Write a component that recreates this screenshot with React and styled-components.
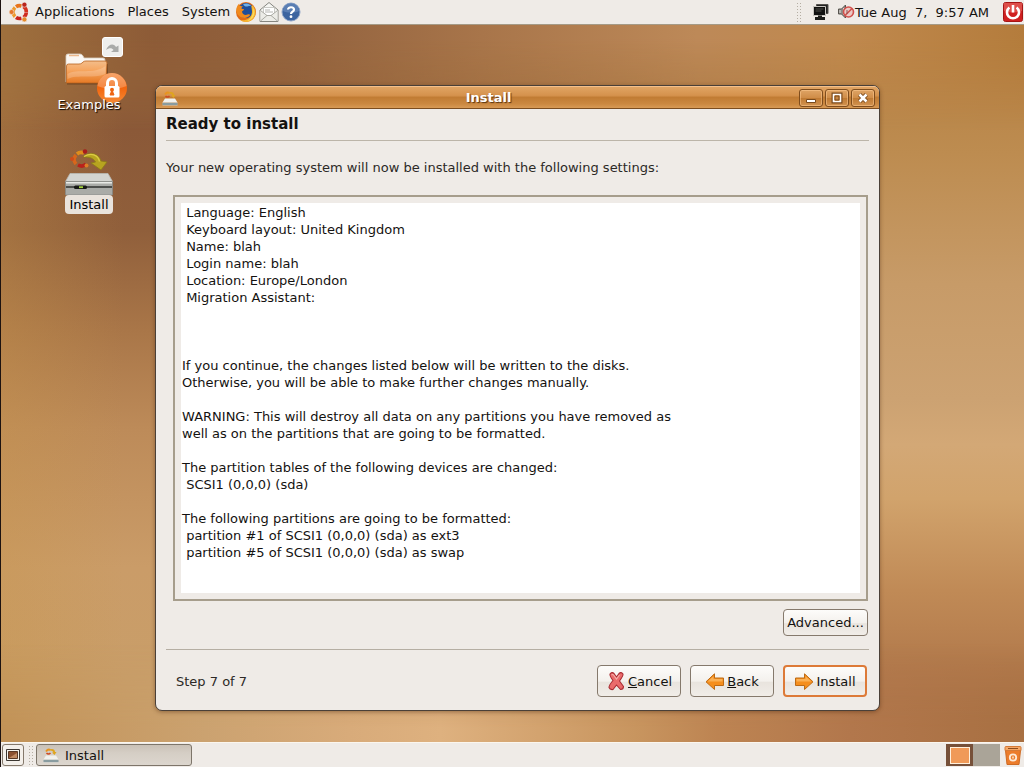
import React from 'react';
import styled, { createGlobalStyle, css } from 'styled-components';

const GlobalStyle = createGlobalStyle`
  *, *::before, *::after { box-sizing: border-box; }
  body {
    margin: 0;
    font-family: "DejaVu Sans", sans-serif;
    font-size: 13px;
    line-height: 17px;
    color: #141210;
  }
  button { font: inherit; color: inherit; margin: 0; padding: 0; cursor: default; }
  svg { display: block; flex: none; }
`;

const Screen = styled.div`
  position: relative;
  isolation: isolate;
  display: flex;
  flex-direction: column;
  min-height: 100vh;
  border-left: 1px solid #1c1210;
  background:
    linear-gradient(to right, rgba(200, 150, 75, 0.35), transparent 12%),
    linear-gradient(to bottom, #9a6a3b 24px, #8b5938 17%, #905f3b 30%, #a97648 43%, #bd8b59 56%, #ca9c68 74%, #c89f69 97%);
`;

const wallpaperLayer = css`
  content: '';
  position: absolute;
  inset: 0;
  z-index: -1;
`;

const Wallpaper = styled.div`
  ${wallpaperLayer}

  &::before {
    ${wallpaperLayer}
    background: linear-gradient(to bottom, #b47e40 24px, #bd8c50 20%, #c79b68 37%, #cca272 52%, #d3a876 58%, #d1a36c 65%, #c08a56 77%, #b27a4c 87%, #aa7248 97%);
    mask-image: linear-gradient(to right, transparent 25%, #000 86%);
  }

  &::after {
    ${wallpaperLayer}
    background: linear-gradient(to right, #c19257, #cba270 20%, #d8ab7a 34%, #deb17f 43%, #c8955f 62%, #bd8452 70%, #b2774c 83%, #a87042);
    mask-image: linear-gradient(to bottom, transparent 84%, #000 95%);
  }
`;

const UpperGlow = styled.div`
  position: absolute;
  inset: 0 0 auto 0;
  height: 130px;
  z-index: -1;
  background: linear-gradient(to right, #9f703d, #8d5b37 15%, #93633f 30%, #a8754a 47%, #bd8958 68%, #c0894e 82%, #b47c3c);
  mask-image: linear-gradient(to bottom, #000 30%, transparent);
`;

const Panel = styled.div`
  display: flex;
  align-items: center;
  height: 25px;
  background: #efebe7;
  ${(p) =>
    p.$bottom
      ? 'border-top: 1px solid #fbf6ee; padding: 0 2px 0 1px;'
      : 'border-bottom: 1px solid #a59a86; padding: 0 1px 1px 7px;'}
`;

const Menu = styled.nav`
  display: flex;
  align-items: center;
  gap: 13px;
  margin: 0 5px;
`;

const PlainButton = styled.button`
  display: flex;
  align-items: center;
  border: 0;
  background: none;
`;

const Launchers = styled.div`
  display: flex;
  align-items: center;
  gap: 2px;
`;

const Grip = styled.span`
  width: 6px;
  height: 20px;
  margin: 0 ${(p) => p.$after}px 0 4px;
  background-image: radial-gradient(circle, #b5aea3 1px, transparent 1px);
  background-size: 3px 3px;
`;

const Tray = styled.div`
  display: flex;
  align-items: center;
  margin-left: auto;
`;

const StatusIcons = styled.div`
  display: flex;
  gap: 7px;
`;

const Clock = styled.time`
  margin-right: 14px;
  padding-top: 1px;
  white-space: pre;
`;

const Main = styled.main`
  flex: 1;
  display: flex;
  align-items: flex-start;
  padding-right: 144px;
`;

const DesktopIcons = styled.div`
  flex: 0 0 154px;
  display: flex;
  flex-direction: column;
  align-items: center;
  gap: 35px;
  padding: 10px 0 0 22px;
`;

const DesktopIcon = styled.button`
  display: flex;
  flex-direction: column;
  align-items: center;
  border: 0;
  background: none;
`;

const IconLabel = styled.span`
  position: relative;
  ${(p) =>
    p.$selected
      ? 'margin-top: -1px; padding: 1px 4px; border-radius: 4px; background: #e9e3dc; color: #000;'
      : 'margin-top: -7px; color: #fff; text-shadow: 1px 1px 1px #000;'}
`;

const Window = styled.section`
  flex: 1;
  min-width: 0;
  margin-top: 60px;
  border: 1px solid #4a4038;
  border-radius: 7px;
  background: #efebe7;
  overflow: hidden;
  box-shadow: 0 1px 4px rgba(70, 35, 10, 0.45);
`;

const TitleBar = styled.header`
  display: flex;
  align-items: center;
  gap: 7px;
  height: 23px;
  padding: 0 4px 0 6px;
  border-top: 1px solid #f3c08c;
  border-bottom: 1px solid #7c4d1f;
  background: linear-gradient(to bottom, #e0a463, #d5924d 40%, #c17c34 50%, #cb8840 80%, #d89a55);
`;

const Title = styled.h1`
  flex: 1;
  margin: 0;
  font-size: 13px;
  line-height: 17px;
  text-align: center;
  color: #fff;
  text-shadow: 1px 1px 1px #5a3411;
`;

const WindowControls = styled.div`
  display: flex;
  gap: 2px;
`;

const WindowControl = styled.button`
  display: grid;
  place-items: center;
  width: 24px;
  height: 18px;
  border: 1px solid #7f4d1d;
  border-radius: 3px;
  background: linear-gradient(to bottom, #dfa465, #cf8c47 50%, #bf7a33 52%, #d29350);
  box-shadow: inset 0 0 0 1px rgba(255, 205, 150, 0.5);
`;

const WindowBody = styled.div`
  padding: 6px 10px 13px;
`;

const PageHeading = styled.h2`
  margin: 0;
  padding-bottom: 6px;
  border-bottom: 1px solid #bcb5a9;
  font-size: 15px;
  line-height: 19px;
`;

const Intro = styled.p`
  margin: 18px 0 19px;
  color: #2c2926;
`;

const SummaryFrame = styled.div`
  margin: 0 1px 8px 7px;
  padding: 6px;
  border: 2px solid #a69d8c;
`;

const Summary = styled.pre`
  min-height: 390px;
  margin: 0;
  padding: 1px;
  background: #fff;
  font-family: inherit;
  overflow: auto;
`;

const ButtonRow = styled.div`
  display: flex;
  align-items: center;
  justify-content: flex-end;
  gap: 9px;
  ${(p) =>
    p.$footer
      ? 'padding: 15px 2px 0 10px; border-top: 1px solid #b5aea3;'
      : 'padding: 0 1px 13px 0;'}
`;

const StepText = styled.span`
  margin-right: auto;
  color: #2c2926;
`;

const Button = styled.button`
  display: flex;
  align-items: center;
  justify-content: center;
  gap: 2px;
  width: ${(p) => (p.$compact ? 85 : 84)}px;
  height: ${(p) => (p.$compact ? 27 : 32)}px;
  border: ${(p) => (p.$primary ? '2px solid #dd7a38' : '1px solid #85796c')};
  border-radius: 4px;
  background: linear-gradient(to bottom, #fdfcfa, #f4f1ed 50%, #e9e4de 55%, #f1ede8);
`;

const TaskButton = styled.button`
  display: flex;
  align-items: center;
  gap: 6px;
  width: 156px;
  height: 22px;
  padding: 0 6px;
  border: 1px solid #7d756a;
  border-radius: 3px;
  background: linear-gradient(to bottom, #c9c1b7, #d5cec5 40%, #dcd6ce);
`;

const ShowDesktop = styled.button`
  display: grid;
  place-items: center;
  width: 22px;
  height: 22px;
  border: 1px solid #85796c;
  border-radius: 3px;
  background: #f4f0eb;
`;

const Workspace = styled.button`
  display: grid;
  place-items: center;
  width: 27px;
  height: 22px;
  border: 0;
  background: ${(p) => (p.$active ? '#765039' : '#aaa498')};
`;

const WorkspaceWindow = styled.span`
  width: 20px;
  height: 17px;
  border: 1px solid #fff0dc;
  background: #f09a58;
`;

const TrashButton = styled(PlainButton)`
  margin-left: 4px;
`;

const CircleOfFriends = () => (
  <svg width="22" height="22" viewBox="0 0 22 22" aria-hidden="true">
    <g fill="none" strokeWidth="3.600">
      <path d="M8 5.800A6.300 6.300 0 0 1 13.500 5" stroke="#e8741c" />
      <path d="M15.500 5.500A6.300 6.300 0 0 1 18.300 11.300" stroke="#d5321f" />
      <path d="M18.300 11.700A6.300 6.300 0 0 1 15.500 16.400" stroke="#cf2a1e" />
      <path d="M13.500 17.200A6.300 6.300 0 0 1 8 16.400" stroke="#c9241d" />
      <path d="M7 15.600A6.300 6.300 0 0 1 7 6.500" stroke="#ee9a2c" />
    </g>
    <circle cx="3.600" cy="11" r="2.500" fill="#e5772a" stroke="#efebe7" strokeWidth=".6" />
    <circle cx="16.400" cy="3.700" r="2.500" fill="#b9251d" stroke="#efebe7" strokeWidth=".6" />
    <circle cx="16.400" cy="18.400" r="2.500" fill="#e58a29" stroke="#efebe7" strokeWidth=".6" />
  </svg>
);

const FirefoxIcon = () => (
  <svg width="22" height="22" viewBox="0 0 22 22" aria-hidden="true">
    <circle cx="11" cy="11" r="10" fill="#e06b16" />
    <circle cx="11" cy="9.500" r="7.600" fill="#1f4e9a" />
    <path d="M8 3.400c3-1.600 6.700-.7 8.200 1.800-2-.8-3.400.4-4.700.3C10 5.400 9 4.600 8 3.400Z" fill="#6fb0e6" />
    <path d="M1.400 8C1.700 5.500 2.600 4 4.200 2.400c-.2 1.300 0 2 .6 2.600 1.200-.3 2.300 0 3.200.6-1.200.5-1.600 1.300-1.400 2.100l2.500.5c-.2 1.300-1.400 1.500-2.100 2.300.2 2.800 2.900 4.100 5.500 3.100 1.400-.5 2.300-.3 2.700.5-1.700 2.400-5 3.500-8 2.500C3 15.300.9 11.800 1.400 8Z" fill="#f08a1d" />
    <path d="M17.300 4.200c3.600 3.400 4.300 9 1.300 13-3.200 4.300-9.400 5-13.600 1.800 5.300 1.300 11.200-1.400 11.900-7.200.3-2.500-.4-5-.6-6.500Z" fill="#f6b530" />
    <path d="M18.300 6.500c1.700 3.200 1.600 7-.5 10-1.400 1.900-3.500 3.200-5.800 3.700 3.800-2 6.800-6.500 6.300-13.700Z" fill="#fbdc5c" />
  </svg>
);

const MailIcon = () => (
  <svg width="20" height="22" viewBox="0 0 20 22" aria-hidden="true">
    <path d="M1 9 10 1.500 19 9v11.500H1Z" fill="#f6f6f3" stroke="#85857f" />
    <path d="M4.500 6.500h11v8h-11Z" fill="#fff" stroke="#b5b5b0" strokeWidth=".7" />
    <path d="M6 9h5M6 11h8" stroke="#b5b5b0" />
    <path d="M1.500 9.500 8 14.500h4l6.500-5V20h-17Z" fill="#ececE7" />
    <path d="M1.500 20 8 14.500h4l6.500 5.500M1.500 9.500 8 14.500M18.500 9.500 12 14.500" fill="none" stroke="#a1a19b" strokeWidth=".9" />
  </svg>
);

const HelpIcon = () => (
  <svg width="20" height="20" viewBox="0 0 20 20" aria-hidden="true">
    <circle cx="10" cy="10" r="9" fill="#3c64a0" stroke="#8fa5c8" />
    <path d="M2 9a8 8 0 0 1 16 0c-4 2-12 2-16 0Z" fill="#6789bb" opacity=".7" />
    <path d="M7 7.500C7 4.500 13 4.500 13 7.700c0 2-3 2.100-3 4.300" fill="none" stroke="#fff" strokeWidth="2.200" />
    <circle cx="10" cy="14.700" r="1.400" fill="#fff" />
  </svg>
);

const NetworkIcon = () => (
  <svg width="18" height="18" viewBox="0 0 18 18" aria-hidden="true">
    <path d="M4.500 1.500h11.500v9H4.500Z" fill="#222" stroke="#55524e" />
    <path d="M1.500 3.500h12v9h-12Z" fill="#111" stroke="#c9c6c0" />
    <path d="M3.500 6h8M3.500 8h6" stroke="#4e4e4a" />
    <path d="M6 12.500h4V14h3v3H3v-3h3Z" fill="#1d1d1b" />
  </svg>
);

const VolumeMutedIcon = () => (
  <svg width="18" height="18" viewBox="0 0 18 18" aria-hidden="true">
    <path d="M1.500 6h3l4-4v13l-4-4h-3Z" fill="#8f8c86" stroke="#57544f" />
    <path d="M3 7v3M6.500 5v7" stroke="#ddd" />
    <circle cx="11.500" cy="9" r="5" fill="#eccac5" stroke="#d1504c" strokeWidth="1.600" />
    <path d="m8 12.500 7-7" stroke="#d1504c" strokeWidth="1.600" />
    <path d="M10 7v4" stroke="#8c5552" />
  </svg>
);

const PowerIcon = () => (
  <svg width="20" height="20" viewBox="0 0 20 20" aria-hidden="true">
    <rect x=".5" y=".5" width="19" height="19" rx="2" fill="#cf2020" stroke="#a51515" />
    <path d="M1 1h18v8C13 11 7 11 1 9Z" fill="#e4625b" opacity=".7" />
    <path d="M6.400 5.500a6 6 0 1 0 7.200 0" fill="none" stroke="#fff" strokeWidth="2.600" />
    <path d="M10 3v7.500" stroke="#fff" strokeWidth="2.600" />
  </svg>
);

const ExamplesIcon = () => (
  <svg width="80" height="68" viewBox="50 35 80 68" aria-hidden="true">
    <defs>
      <linearGradient id="folderFront" x1="0" y1="0" x2="0" y2="1">
        <stop offset="0" stopColor="#f3bd8b" />
        <stop offset=".4" stopColor="#f6a762" />
        <stop offset="1" stopColor="#e77a25" />
      </linearGradient>
      <linearGradient id="lockDisc" x1="0" y1="0" x2="0" y2="1">
        <stop offset="0" stopColor="#f58a3e" />
        <stop offset=".5" stopColor="#f2660f" />
        <stop offset="1" stopColor="#f68a35" />
      </linearGradient>
    </defs>
    <path d="M68 83.500h40V64" fill="none" stroke="#4a2a12" strokeWidth="2" opacity=".5" />
    <path d="M67 82V56q0-2 2-2h12q2 0 3 2l1 2h19q2 0 2 2v5L68 82Z" fill="#fbf8f4" stroke="#d9cfc2" strokeWidth=".8" />
    <path d="M70 55.500h10" stroke="#edb98c" strokeWidth="1.500" />
    <path d="M67.500 83V66q0-2 2-2H80q2 0 3-1l1-1q1-1 3-1h19q2 0 2 2l-1 18q0 2-2 2Z" fill="url(#folderFront)" stroke="#b9631f" strokeWidth=".8" />
    <path d="M68.500 74c10-6 26 1 38-8v8c-12 5-28 0-38 5Z" fill="#fff" opacity=".2" />
    <rect x="103.500" y="37.500" width="20" height="19" rx="2.500" fill="#efefed" stroke="#fff" />
    <path d="M107 50c2-6 8-7.500 10-3l2.500-1.500v6.500H112l2.500-2c-1.500-2.500-4.500-2.500-7.500 0Z" fill="#a9aba9" />
    <circle cx="113" cy="88" r="15" fill="url(#lockDisc)" />
    <path d="M98.500 86a14.600 14.600 0 0 1 29 0c-9 4-20 4-29 0Z" fill="#fff" opacity=".22" />
    <path d="M108.500 87v-4a4.500 4.500 0 0 1 9 0v4" fill="none" stroke="#fff" strokeWidth="3" />
    <rect x="105.500" y="86" width="15" height="11.500" rx="1.500" fill="#fff" />
    <circle cx="113" cy="89.800" r="2" fill="#ee6512" />
    <path d="m113 90 2 5h-4Z" fill="#ee6512" stroke="#ee6512" />
  </svg>
);

const InstallerIcon = () => (
  <svg width="48" height="48" viewBox="0 0 48 48" aria-hidden="true">
    <g fill="none" strokeWidth="3.600">
      <path d="M12 6q3-2.500 7-1" stroke="#df8d1c" />
      <path d="M11 7q-4 4.500 0 9" stroke="#d8661b" />
      <path d="M13 17q5 2.500 8-1" stroke="#b9211b" />
    </g>
    <circle cx="7" cy="11" r="2" fill="#cc4c1b" />
    <circle cx="20" cy="3.500" r="2.200" fill="#a81c1b" />
    <circle cx="21.500" cy="17.500" r="2" fill="#df7c25" />
    <path d="M18 9c6-6 16-4 18 4l6 1-6 8-10-7 4.500-1c-2-4-6-5-12.500-5Z" fill="#b7a420" stroke="#8c7b18" strokeWidth=".8" />
    <path d="M19 8.500c7-4 14-2 15.500 5" fill="none" stroke="#dccb45" strokeWidth="1.200" />
    <path d="M5 25.500h38l4.500 8H.5Z" fill="#d3d4d0" stroke="#b9bab5" strokeWidth=".8" />
    <path d="M.5 33.500h47V47H.5Z" fill="#a9aba7" stroke="#878985" strokeWidth=".8" />
    <path d="M1 34.800h46" stroke="#e8eae6" strokeWidth="1.500" />
    <path d="M1 39h46" stroke="#2f312e" strokeWidth="1.300" />
    <rect x="9" y="37.500" width="13" height="3.500" rx="1.500" fill="#161815" />
    <rect x="14" y="38.300" width="4" height="1.800" fill="#a5d43c" />
  </svg>
);

const MiniInstallerIcon = () => (
  <svg width="16" height="16" viewBox="0 0 16 16" aria-hidden="true">
    <path d="M3 4.500q2-3 4.500-1.500" fill="none" stroke="#e8941f" strokeWidth="1.800" />
    <path d="M3.500 6q2 2 4 0" fill="none" stroke="#cf4a20" strokeWidth="1.500" />
    <path d="M6.500 2.500c3-1.500 5.500 0 5.500 2.500h1.500L11.500 8 9 5.500h1.300C10 4 8.500 3.500 6.500 3.500Z" fill="#dfa51f" />
    <path d="M3 8.500h10l2.500 4H.5Z" fill="#f1f1ee" />
    <path d="M.5 12.500h15v3H.5Z" fill="#c4cac8" />
    <path d="M.5 14h15" stroke="#4f6f78" />
  </svg>
);

const CancelIcon = () => (
  <svg width="20" height="20" viewBox="0 0 20 20" aria-hidden="true">
    <path d="M4 3q2-2.500 4-.5L10.500 6 13 2.500q2-2 4 .5.500 1.500-3.500 7l4 5.500q0 3-3 3l-4-4.500-3.500 4.500q-3 .5-4-2Q3 14 7 9.500 3.500 5 4 3Z" fill="#ea6b6b" stroke="#a92b32" strokeWidth="1.100" strokeLinejoin="round" />
    <path d="M5.500 4q1.500-1 2 0l3 4 3-4" fill="none" stroke="#f6b0aa" strokeWidth="1.100" />
  </svg>
);

const ArrowIcon = ({ flip }) => (
  <svg width="20" height="20" viewBox="0 0 20 20" aria-hidden="true">
    <g transform={flip ? 'matrix(-1 0 0 1 20 0)' : undefined}>
      <path d="M1.500 7h9V2.800l8.500 8-8.500 7.700V14.500h-9Z" fill="#f58e1d" stroke="#bd6a14" strokeLinejoin="round" />
      <path d="M2.500 8h9V5.200l5.800 5.300H2.500Z" fill="#fbb65e" opacity=".85" />
    </g>
  </svg>
);

const MinimizeIcon = () => (
  <svg width="14" height="12" viewBox="0 0 14 12" aria-hidden="true">
    <path d="M2.500 7.500h9v3h-9Z" fill="#fff" stroke="#7a4a1c" />
  </svg>
);

const MaximizeIcon = () => (
  <svg width="14" height="12" viewBox="0 0 14 12" aria-hidden="true">
    <path d="M3 2h8v8H3Z" fill="none" stroke="#7a4a1c" strokeWidth="3" />
    <path d="M3.500 2.500h7v7h-7Z" fill="#c78643" stroke="#fff" strokeWidth="1.600" />
    <path d="M5 4h4v4H5Z" fill="none" stroke="#7a4a1c" />
  </svg>
);

const CloseIcon = () => (
  <svg width="14" height="12" viewBox="0 0 14 12" aria-hidden="true">
    <path d="m3.500 2.500 7 7M10.500 2.500l-7 7" stroke="#7a4a1c" strokeWidth="4.400" />
    <path d="m3.500 2.500 7 7M10.500 2.500l-7 7" stroke="#fff" strokeWidth="2.600" />
  </svg>
);

const ShowDesktopIcon = () => (
  <svg width="16" height="14" viewBox="0 0 16 14" aria-hidden="true">
    <path d="M1.500 1.500h13v11h-13Z" fill="#f6f3ee" stroke="#3c3732" />
    <path d="M3.500 3.500h9v7h-9Z" fill="#8c5130" stroke="#5a3825" />
    <path d="m4 10 8-5v5Z" fill="#c08a62" />
  </svg>
);

const TrashIcon = () => (
  <svg width="18" height="20" viewBox="0 0 18 20" aria-hidden="true">
    <path d="M1.500 5.500h15l-1.500 14H3Z" fill="#ec7c2b" stroke="#cf6a22" />
    <path d="M1 2.500q0-1 1-1h14q1 0 1 1v3H1Z" fill="#f5a767" stroke="#d67a36" />
    <path d="M4 3.500h10" stroke="#8d4c1d" />
    <circle cx="9" cy="12.500" r="3.200" fill="none" stroke="#fde9d6" strokeWidth="1.800" />
    <path d="M9 11.500v2" stroke="#fde9d6" strokeWidth="1.500" />
  </svg>
);

const summaryText = ` Language: English
 Keyboard layout: United Kingdom
 Name: blah
 Login name: blah
 Location: Europe/London
 Migration Assistant:



If you continue, the changes listed below will be written to the disks.
Otherwise, you will be able to make further changes manually.

WARNING: This will destroy all data on any partitions you have removed as
well as on the partitions that are going to be formatted.

The partition tables of the following devices are changed:
 SCSI1 (0,0,0) (sda)

The following partitions are going to be formatted:
 partition #1 of SCSI1 (0,0,0) (sda) as ext3
 partition #5 of SCSI1 (0,0,0) (sda) as swap
`;

export default function App() {
  return (
    <Screen>
      <GlobalStyle />
      <Wallpaper />
      <UpperGlow />

      <Panel>
        <CircleOfFriends />
        <Menu aria-label="Main menu">
          <PlainButton>Applications</PlainButton>
          <PlainButton>Places</PlainButton>
          <PlainButton>System</PlainButton>
        </Menu>
        <Launchers>
          <PlainButton aria-label="Firefox"><FirefoxIcon /></PlainButton>
          <PlainButton aria-label="Mail"><MailIcon /></PlainButton>
          <PlainButton aria-label="Help"><HelpIcon /></PlainButton>
        </Launchers>
        <Tray>
          <Grip $after={10} />
          <StatusIcons>
            <PlainButton aria-label="Network"><NetworkIcon /></PlainButton>
            <PlainButton aria-label="Volume"><VolumeMutedIcon /></PlainButton>
          </StatusIcons>
          <Clock>{'Tue Aug  7,  9:57 AM'}</Clock>
          <PlainButton aria-label="Shut down"><PowerIcon /></PlainButton>
        </Tray>
      </Panel>

      <Main>
        <DesktopIcons>
          <DesktopIcon>
            <ExamplesIcon />
            <IconLabel>Examples</IconLabel>
          </DesktopIcon>
          <DesktopIcon>
            <InstallerIcon />
            <IconLabel $selected>Install</IconLabel>
          </DesktopIcon>
        </DesktopIcons>

        <Window aria-labelledby="window-title">
          <TitleBar>
            <MiniInstallerIcon />
            <Title id="window-title">Install</Title>
            <WindowControls>
              <WindowControl aria-label="Minimize"><MinimizeIcon /></WindowControl>
              <WindowControl aria-label="Maximize"><MaximizeIcon /></WindowControl>
              <WindowControl aria-label="Close"><CloseIcon /></WindowControl>
            </WindowControls>
          </TitleBar>
          <WindowBody>
            <PageHeading>Ready to install</PageHeading>
            <Intro>Your new operating system will now be installed with the following settings:</Intro>
            <SummaryFrame>
              <Summary>{summaryText}</Summary>
            </SummaryFrame>
            <ButtonRow>
              <Button $compact>Advanced...</Button>
            </ButtonRow>
            <ButtonRow $footer>
              <StepText>Step 7 of 7</StepText>
              <Button><CancelIcon /><span><u>C</u>ancel</span></Button>
              <Button><ArrowIcon flip /><span><u>B</u>ack</span></Button>
              <Button $primary><ArrowIcon /><span>Install</span></Button>
            </ButtonRow>
          </WindowBody>
        </Window>
      </Main>

      <Panel $bottom>
        <ShowDesktop aria-label="Show desktop"><ShowDesktopIcon /></ShowDesktop>
        <Grip $after={2} />
        <TaskButton><MiniInstallerIcon />Install</TaskButton>
        <Tray>
          <Workspace $active aria-label="Workspace 1"><WorkspaceWindow /></Workspace>
          <Workspace aria-label="Workspace 2" />
          <TrashButton aria-label="Trash"><TrashIcon /></TrashButton>
        </Tray>
      </Panel>
    </Screen>
  );
}
